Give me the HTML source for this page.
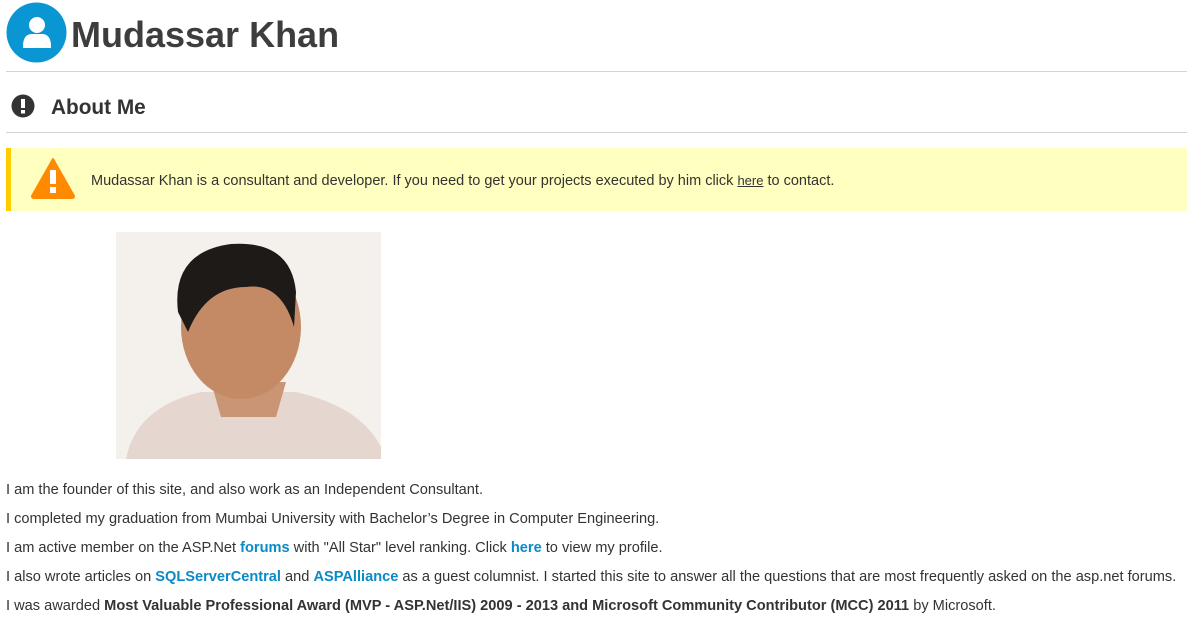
<!DOCTYPE html>
<html><head><meta charset="utf-8"><style>
body{margin:0;background:#fff;font-family:"Liberation Sans",sans-serif;color:#333;width:1187px;height:623px;overflow:hidden;position:relative}
.abs{position:absolute}
h1{position:absolute;left:71px;top:13px;margin:0;font-size:36px;font-weight:bold;color:#3d3d3d;line-height:44px}
.hr{position:absolute;left:6px;right:0;height:1px;background:#d4d4d4}
.p{position:absolute;left:6px;font-size:14.6px;line-height:18px;color:#333;white-space:nowrap}
.p a{color:#0a8ac6;font-weight:bold;text-decoration:none}
</style></head><body>
<svg class="abs" style="left:6px;top:2px" width="61" height="61" viewBox="0 0 61 61"><circle cx="30.5" cy="30.5" r="30" fill="#0a96d2"/><circle cx="31" cy="23" r="8" fill="#fff"/><path d="M17 44 Q17 33 25 32 L37 32 Q45 33 45 44 L45 46 L17 46Z" fill="#fff"/></svg>
<h1>Mudassar Khan</h1>
<div class="hr" style="top:71px"></div>
<svg class="abs" style="left:11px;top:94px" width="24" height="24" viewBox="0 0 24 24"><circle cx="12" cy="12" r="11.5" fill="#333"/><rect x="10" y="5" width="4" height="9" fill="#fff"/><rect x="10" y="16" width="4" height="3.5" fill="#fff"/></svg>
<div class="abs" style="left:51px;top:96px;font-size:20.8px;font-weight:bold;color:#333">About Me</div>
<div class="hr" style="top:132px"></div>
<div class="abs" style="left:6px;top:148px;width:1181px;height:63px;background:#ffffc0;border-left:5px solid #ffcc00;box-sizing:border-box"></div>
<svg class="abs" style="left:30px;top:157px" width="46" height="42" viewBox="0 0 46 42"><path d="M23 2 L44 39 Q44 41 42 41 L4 41 Q2 41 2 39Z" fill="#ff8a00" stroke="#ff8a00" stroke-linejoin="round" stroke-width="2"/><rect x="20" y="13" width="6" height="14" fill="#fff"/><rect x="20" y="30" width="6" height="6" fill="#fff"/></svg>
<div class="p" style="left:91px;top:172px;font-size:14.5px">Mudassar Khan is a consultant and developer. If you need to get your projects executed by him click <u style="font-size:13px">here</u> to contact.</div>
<svg class="abs" style="left:116px;top:232px" width="265" height="227" viewBox="0 0 265 227"><rect width="265" height="227" fill="#f4f1ec"/><path d="M10 227 Q20 175 85 160 L180 160 Q245 175 265 215 L265 227Z" fill="#e6d6d0"/><path d="M95 150 L170 150 L160 185 L105 185Z" fill="#c99575"/><ellipse cx="125" cy="95" rx="60" ry="72" fill="#c48a66"/><path d="M62 80 Q55 20 115 12 Q175 8 180 60 L178 95 Q165 50 130 55 Q90 55 72 100Z" fill="#1e1a18"/></svg>
<div class="p" style="top:481px">I am the founder of this site, and also work as an Independent Consultant.</div>
<div class="p" style="top:510px">I completed my graduation from Mumbai University with Bachelor’s Degree in Computer Engineering.</div>
<div class="p" style="top:539px">I am active member on the ASP.Net <a>forums</a> with "All Star" level ranking. Click <a>here</a> to view my profile.</div>
<div class="p" style="top:568px">I also wrote articles on <a>SQLServerCentral</a> and <a>ASPAlliance</a> as a guest columnist. I started this site to answer all the questions that are most frequently asked on the asp.net forums.</div>
<div class="p" style="top:597px">I was awarded <b>Most Valuable Professional Award (MVP - ASP.Net/IIS) 2009 - 2013 and Microsoft Community Contributor (MCC) 2011</b> by Microsoft.</div>
</body></html>
